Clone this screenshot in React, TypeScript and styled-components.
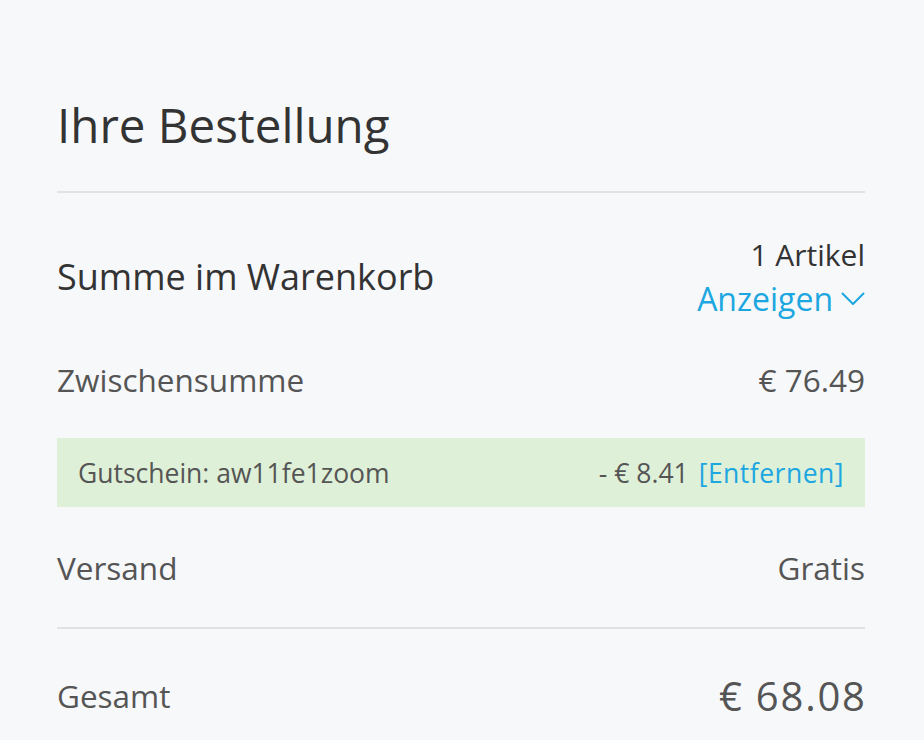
import React from "react";
import styled, { createGlobalStyle } from "styled-components";

const Global = createGlobalStyle`
  html, body { margin: 0; padding: 0; background: #f7f8fa; }
  body { font-family: "Open Sans", "Noto Sans", sans-serif; }
`;

const Page = styled.div`
  background: #f7f8fa;
  height: 740px;
  overflow: hidden;
  padding: 0 59px 0 57px;
  box-sizing: border-box;
`;

const Title = styled.h1`
  margin: 95px 0 36px;
  font-weight: 400;
  font-size: 47.5px;
  line-height: 60px;
  color: #333;
`;

const Divider = styled.hr<{ $top?: number }>`
  margin: ${(p) => p.$top ?? 0}px 0 0;
  border: 0;
  height: 2px;
  background: #e1e2e4;
`;

const Row = styled.div<{ $top: number }>`
  display: flex;
  justify-content: space-between;
  align-items: center;
  margin-top: ${(p) => p.$top}px;
  font-size: 31.5px;
  line-height: 44px;
  color: #555;
`;

const CartLabel = styled.span`
  font-size: 36px;
  color: #333;
`;

const RightCol = styled.div`
  display: flex;
  flex-direction: column;
  align-items: flex-end;
`;

const Count = styled.span`
  color: #333;
  font-size: 30px;
`;

const Toggle = styled.button`
  display: flex;
  align-items: center;
  gap: 8px;
  background: none;
  border: 0;
  padding: 0;
  font: inherit;
  font-size: 32px;
  line-height: 44px;
  color: #1ca7e1;
  cursor: pointer;
`;

const Coupon = styled.div`
  display: flex;
  justify-content: space-between;
  align-items: center;
  margin-top: 36px;
  height: 69px;
  padding: 0 21px;
  background: #dff0d8;
  font-size: 26.5px;
  color: #555;
`;

const CouponRight = styled.div`
  display: flex;
  gap: 10px;
  align-items: center;
`;

const Remove = styled.a`
  color: #1ca7e1;
  cursor: pointer;
  letter-spacing: 0.5px;
`;

const Total = styled.span`
  font-size: 40px;
  letter-spacing: 1.8px;
  margin-right: -1.8px;
  color: #555;
  line-height: 50px;
`;

const Chevron = () => (
  <svg width="24" height="14" viewBox="0 0 24 14" fill="none">
    <path d="M1.5 1.5 L12 12 L22.5 1.5" stroke="#1ca7e1" strokeWidth="2" strokeLinecap="round" strokeLinejoin="round" />
  </svg>
);

export default function App() {
  return (
    <>
      <Global />
      <Page>
        <Title>Ihre Bestellung</Title>
        <Divider />
        <Row $top={40}>
          <CartLabel>Summe im Warenkorb</CartLabel>
          <RightCol>
            <Count>1 Artikel</Count>
            <Toggle>
              Anzeigen <Chevron />
            </Toggle>
          </RightCol>
        </Row>
        <Row $top={37}>
          <span>Zwischensumme</span>
          <span>€ 76.49</span>
        </Row>
        <Coupon>
          <span>Gutschein: aw11fe1zoom</span>
          <CouponRight>
            <span>- € 8.41</span>
            <Remove>[Entfernen]</Remove>
          </CouponRight>
        </Coupon>
        <Row $top={39}>
          <span>Versand</span>
          <span>Gratis</span>
        </Row>
        <Divider $top={37} />
        <Row $top={42}>
          <span>Gesamt</span>
          <Total>€ 68.08</Total>
        </Row>
      </Page>
    </>
  );
}
